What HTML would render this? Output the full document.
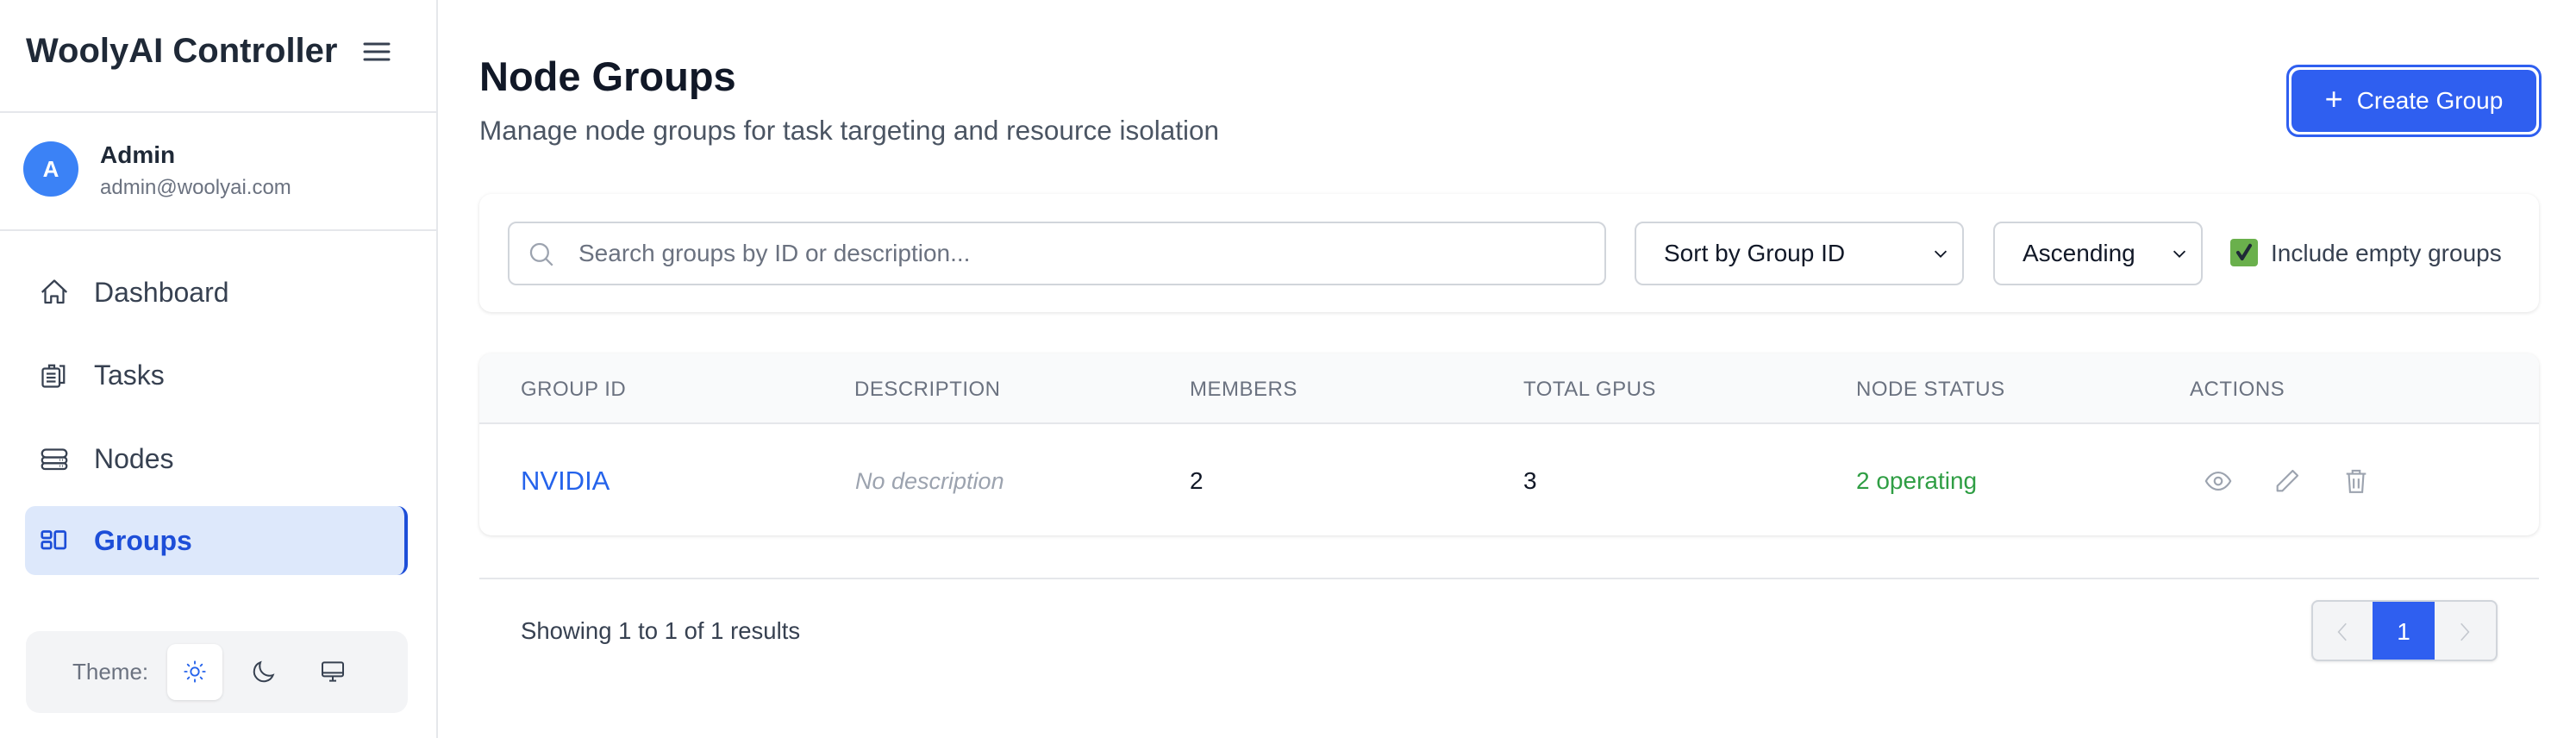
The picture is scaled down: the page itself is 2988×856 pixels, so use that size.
<!DOCTYPE html>
<html><head><meta charset="utf-8"><style>
*{box-sizing:border-box;margin:0;padding:0}
body{width:2988px;height:856px;background:#fff;font-family:"Liberation Sans",sans-serif;position:relative;overflow:hidden;color:#111827}
.a{position:absolute}
.side{left:0;top:0;width:508px;height:856px;border-right:2px solid #e5e7eb;background:#fff}
.nav{left:29px;width:444px;height:80px;display:flex;align-items:center;font-size:32px;color:#374151}
.nav svg{margin-left:16px;margin-right:28px}
.th{font-size:24px;color:#6b7280;top:438px;letter-spacing:0.5px}
.sel{border:2px solid #d1d5db;border-radius:10px;height:74px;top:257px;font-size:28px;color:#111827;display:flex;align-items:center;padding-left:32px}
.sel svg{position:absolute;right:14px}
</style></head><body>
<div class="a side">
  <div class="a" style="left:30px;top:37px;font-size:40px;font-weight:bold;color:#1f2937">WoolyAI Controller</div>
  <svg class="a" style="left:420px;top:46px" width="34" height="28" viewBox="0 0 34 28"><path d="M3 5h28M3 14h28M3 23h28" stroke="#374151" stroke-width="3" stroke-linecap="round"/></svg>
  <div class="a" style="left:0;top:129px;width:506px;height:2px;background:#e5e7eb"></div>
  <div class="a" style="left:27px;top:164px;width:64px;height:64px;border-radius:50%;background:#3b82f6;color:#fff;font-weight:bold;font-size:26px;display:flex;align-items:center;justify-content:center">A</div>
  <div class="a" style="left:116px;top:164px;font-size:28px;font-weight:bold;color:#1f2937">Admin</div>
  <div class="a" style="left:116px;top:204px;font-size:24px;color:#6b7280">admin@woolyai.com</div>
  <div class="a" style="left:0;top:266px;width:506px;height:2px;background:#e5e7eb"></div>
  <div class="a nav" style="top:299px"><svg width="36" height="36" viewBox="0 0 24 24" fill="none" stroke="#374151" stroke-width="1.5" stroke-linejoin="round"><path d="M2.5 12L12 3l9.5 9M5 10v10h4.5v-5h5v5H19V10"/></svg>Dashboard</div>
  <div class="a nav" style="top:395px"><svg width="36" height="36" viewBox="0 0 24 24" fill="none" stroke="#374151" stroke-width="1.5"><rect x="3" y="7" width="13" height="14" rx="1.5"/><path d="M8 7V4.5h4V7M16 5h3.5v13H16M6 11h7M6 14h7M6 17h7"/></svg>Tasks</div>
  <div class="a nav" style="top:492px"><svg width="36" height="36" viewBox="0 0 24 24" fill="none" stroke="#374151" stroke-width="1.5"><rect x="2.5" y="5" width="19" height="6" rx="3"/><rect x="2.5" y="11" width="19" height="4.5" rx="2.2"/><rect x="2.5" y="15.5" width="19" height="4.5" rx="2.2"/><path d="M16 13h.5M18 13h.5M16 17.7h.5M18 17.7h.5"/></svg>Nodes</div>
  <div class="a nav" style="top:587px;background:#dde8fb;border-radius:12px;border-right:4px solid #1d4ed8;color:#1d4ed8;font-weight:bold"><svg width="36" height="36" viewBox="0 0 24 24" fill="none" stroke="#1d4ed8" stroke-width="1.8"><rect x="2.5" y="5" width="7" height="5" rx="1.2"/><rect x="2.5" y="13" width="7" height="5" rx="1.2"/><rect x="12.5" y="5" width="8" height="13" rx="1.2"/></svg>Groups</div>
  <div class="a" style="left:30px;top:732px;width:443px;height:95px;background:#f3f4f6;border-radius:16px"></div>
  <div class="a" style="left:84px;top:764px;font-size:26px;color:#6b7280">Theme:</div>
  <div class="a" style="left:194px;top:747px;width:64px;height:65px;background:#fff;border-radius:10px;box-shadow:0 1px 3px rgba(0,0,0,.12)"></div>
  <svg class="a" style="left:212px;top:765px" width="28" height="28" viewBox="0 0 24 24" fill="none" stroke="#2563eb" stroke-width="1.6" stroke-linecap="round"><circle cx="12" cy="12" r="4"/><path d="M12 2v2M12 20v2M2 12h2M20 12h2M4.9 4.9l1.4 1.4M17.7 17.7l1.4 1.4M4.9 19.1l1.4-1.4M17.7 6.3l1.4-1.4"/></svg>
  <svg class="a" style="left:290px;top:763px" width="32" height="32" viewBox="0 0 24 24" fill="none" stroke="#374151" stroke-width="1.5"><path d="M20 15A8.5 8.5 0 0 1 9 4a8.5 8.5 0 1 0 11 11z"/></svg>
  <svg class="a" style="left:370px;top:763px" width="32" height="32" viewBox="0 0 24 24" fill="none" stroke="#374151" stroke-width="1.5"><rect x="3" y="4" width="18" height="12" rx="1.5"/><path d="M3 13h18M9 20h6M12 16v4"/></svg>
</div>

<div class="a" style="left:556px;top:61px;font-size:47px;font-weight:bold;color:#111827">Node Groups</div>
<div class="a" style="left:556px;top:133px;font-size:31.5px;color:#4b5563">Manage node groups for task targeting and resource isolation</div>
<div class="a" style="left:2652px;top:75px;width:296px;height:84px;border:3px solid #2f5ff0;border-radius:14px"></div>
<div class="a" style="left:2658px;top:81px;width:284px;height:72px;background:#2f5ff0;border-radius:10px;color:#fff;font-size:28px;display:flex;align-items:center;justify-content:center"><span style="font-size:36px;font-weight:300;margin-right:16px;margin-top:-4px">+</span>Create Group</div>

<div class="a" style="left:556px;top:225px;width:2389px;height:137px;border-radius:14px;box-shadow:0 1px 4px rgba(0,0,0,.12);background:#fff"></div>
<div class="a sel" style="left:589px;width:1274px;color:#6b7280;padding-left:80px">Search groups by ID or description...</div>
<svg class="a" style="left:611px;top:278px" width="34" height="34" viewBox="0 0 24 24" fill="none" stroke="#9ca3af" stroke-width="1.6"><circle cx="10.5" cy="10.5" r="7"/><path d="M15.5 15.5l5.5 5.5"/></svg>
<div class="a sel" style="left:1896px;width:382px">Sort by Group ID<svg width="22" height="22" viewBox="0 0 24 24" fill="none" stroke="#111827" stroke-width="2"><path d="M5 9l7 7 7-7"/></svg></div>
<div class="a sel" style="left:2312px;width:243px">Ascending<svg width="22" height="22" viewBox="0 0 24 24" fill="none" stroke="#111827" stroke-width="2"><path d="M5 9l7 7 7-7"/></svg></div>
<div class="a" style="left:2587px;top:277px;width:32px;height:32px;background:#6ab04c;border-radius:4px"></div>
<svg class="a" style="left:2589px;top:279px" width="28" height="28" viewBox="0 0 24 24" fill="none" stroke="#1f2937" stroke-width="3.5" stroke-linecap="round" stroke-linejoin="round"><path d="M6 12l4 6 8-13"/></svg>
<div class="a" style="left:2634px;top:278px;font-size:28px;color:#374151">Include empty groups</div>

<div class="a" style="left:556px;top:410px;width:2389px;height:211px;border-radius:14px;box-shadow:0 1px 4px rgba(0,0,0,.12);background:#fff;overflow:hidden"><div style="height:82px;background:#f9fafb;border-bottom:2px solid #e5e7eb"></div></div>
<div class="a th" style="left:604px">GROUP ID</div>
<div class="a th" style="left:991px">DESCRIPTION</div>
<div class="a th" style="left:1380px">MEMBERS</div>
<div class="a th" style="left:1767px">TOTAL GPUS</div>
<div class="a th" style="left:2153px">NODE STATUS</div>
<div class="a th" style="left:2540px">ACTIONS</div>
<div class="a" style="left:604px;top:540px;font-size:31px;color:#2563eb">NVIDIA</div>
<div class="a" style="left:992px;top:543px;font-size:27px;color:#9ca3af;font-style:italic">No description</div>
<div class="a" style="left:1380px;top:542px;font-size:28px;color:#111827">2</div>
<div class="a" style="left:1767px;top:542px;font-size:28px;color:#111827">3</div>
<div class="a" style="left:2153px;top:542px;font-size:28px;color:#2f9e44">2 operating</div>
<svg class="a" style="left:2556px;top:541px" width="34" height="34" viewBox="0 0 24 24" fill="none" stroke="#9ca3af" stroke-width="1.5"><path d="M2 12s3.5-7 10-7 10 7 10 7-3.5 7-10 7S2 12 2 12z"/><circle cx="12" cy="12" r="3"/></svg>
<svg class="a" style="left:2636px;top:541px" width="34" height="34" viewBox="0 0 24 24" fill="none" stroke="#9ca3af" stroke-width="1.5" stroke-linejoin="round"><path d="M16.5 3.5l4 4L8 20H4v-4z"/></svg>
<svg class="a" style="left:2716px;top:541px" width="34" height="34" viewBox="0 0 24 24" fill="none" stroke="#9ca3af" stroke-width="1.5"><path d="M4 6h16M9 6V3.5h6V6M6 6l1 15h10l1-15M10 10v8M14 10v8"/></svg>

<div class="a" style="left:556px;top:670px;width:2389px;height:2px;background:#e5e7eb"></div>
<div class="a" style="left:604px;top:716px;font-size:27.5px;color:#374151">Showing 1 to 1 of 1 results</div>
<div class="a" style="left:2681px;top:696px;width:216px;height:71px;border:2px solid #d1d5db;border-radius:8px;background:#f3f4f6;box-shadow:0 1px 3px rgba(0,0,0,.1);overflow:hidden">
  <div class="a" style="left:69px;top:0;width:72px;height:69px;background:#2f5ff0;color:#fff;font-size:28px;display:flex;align-items:center;justify-content:center">1</div>
  <svg class="a" style="left:22px;top:20px" width="26" height="30" viewBox="0 0 24 24" fill="none" stroke="#c4c8cf" stroke-width="1.5"><path d="M15 3l-8 9 8 9"/></svg>
  <svg class="a" style="left:162px;top:20px" width="26" height="30" viewBox="0 0 24 24" fill="none" stroke="#c4c8cf" stroke-width="1.5"><path d="M9 3l8 9-8 9"/></svg>
</div>
</body></html>
